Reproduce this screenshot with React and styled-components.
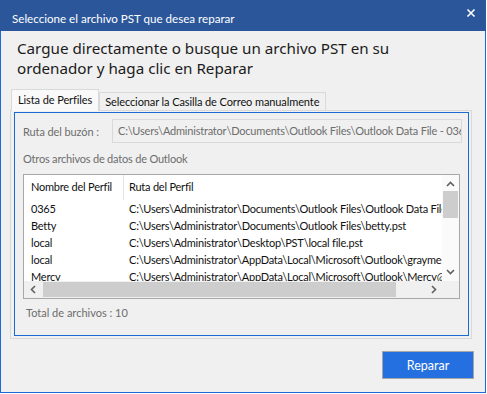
import React from "react";
import styled, { createGlobalStyle } from "styled-components";

const Global = createGlobalStyle`
  html, body {
    margin: 0;
    padding: 0;
    background: #ffffff;
  }
  body {
    font-family: Lato, "Noto Sans", sans-serif;
    font-size: 11px;
  }
`;

const Window = styled.div`
  width: 486px;
  height: 393px;
  box-sizing: border-box;
  background: #f0f0f0;
  border: 1px solid #1d6ad4;
  border-top: none;
  display: flex;
  flex-direction: column;
`;

const TitleBar = styled.div`
  height: 31px;
  margin: 0 -1px;
  background: #2b579a;
  color: #ffffff;
  display: flex;
  justify-content: space-between;
  align-items: flex-start;
  padding: 11px 10px 0 12px;
  box-sizing: border-box;
  font-size: 11.6px;
  line-height: 16px;
`;

const Close = styled.svg`
  margin-top: -3px;
`;

const Heading = styled.div`
  box-sizing: border-box;
  padding: 7px 0 0 16px;
  height: 57px;
  font-family: "Noto Sans", sans-serif;
  font-size: 15.2px;
  line-height: 20px;
  color: #1b1b1b;
`;

const TabStrip = styled.div`
  display: flex;
  align-items: flex-end;
  padding-left: 10px;
  height: 22px;
`;

const Tab = styled.div`
  box-sizing: border-box;
  height: ${p => (p.$active ? "22px" : "18px")};
  padding: ${p => (p.$active ? "0 6px 0 6px" : "0 6px 0 5px")};
  border: 1px solid #d9d9d9;
  border-bottom: none;
  background: ${p => (p.$active ? "#f9f9f9" : "#f0f0f0")};
  color: #111111;
  font-size: 11px;
  letter-spacing: -0.1px;
  line-height: ${p => (p.$active ? "20px" : "17px")};
  white-space: nowrap;
  margin-bottom: ${p => (p.$active ? "-1px" : "0")};
  position: relative;
  z-index: ${p => (p.$active ? 1 : 0)};
`;

const Panel = styled.div`
  margin: 0 13px 0 9px;
  height: 229px;
  box-sizing: border-box;
  border: 1px solid #d9d9d9;
  padding: 1px 2px 2px 3px;
  display: flex;
`;

const PanelInner = styled.div`
  flex: 1;
  min-width: 0;
  border: 1px solid #1a6ad6;
  padding: 6px 6px 0 8px;
  display: flex;
  flex-direction: column;
  color: #6d6d6d;
`;

const PathRow = styled.div`
  display: flex;
  align-items: center;
  height: 24px;
`;

const Label = styled.div`
  width: 89px;
  flex: none;
  white-space: nowrap;
  letter-spacing: -0.1px;
`;

const PathBox = styled.div`
  flex: 1;
  min-width: 0;
  height: 24px;
  box-sizing: border-box;
  border: 1px solid #d9d9d9;
  background: #f0f0f0;
  padding: 0 0 0 5px;
  line-height: 22px;
  white-space: nowrap;
  overflow: hidden;
  color: #6d6d6d;
  letter-spacing: -0.2px;
`;

const SubLabel = styled.div`
  margin-top: 7px;
  height: 17px;
  line-height: 17px;
  letter-spacing: -0.2px;
`;

const ListBox = styled.div`
  margin-top: 7px;
  width: 437px;
  height: 125px;
  box-sizing: border-box;
  border: 1px solid #a8a8a8;
  background: #ffffff;
  display: grid;
  grid-template-columns: 418px 17px;
  grid-template-rows: 106px 17px;
  color: #111111;
  letter-spacing: -0.22px;
`;

const ListView = styled.div`
  overflow: hidden;
  min-width: 0;
`;

const Row = styled.div`
  display: flex;
  height: ${p => (p.$header ? "25px" : "17px")};
  line-height: ${p => (p.$header ? "23px" : "17px")};
  white-space: nowrap;
`;

const NameCell = styled.div`
  width: 100px;
  flex: none;
  padding-left: 7px;
  box-sizing: border-box;
  border-right: ${p => (p.$header ? "1px solid #e5e5e5" : "1px solid transparent")};
`;

const PathCell = styled.div`
  padding-left: 5px;
`;

const VScroll = styled.div`
  background: #fafafa;
  display: flex;
  flex-direction: column;
  align-items: center;
  padding: 5px 0 5px;
`;

const VThumb = styled.div`
  width: 15px;
  height: 27px;
  background: #cdcdcd;
  margin-top: 2px;
`;

const Spacer = styled.div`
  flex: 1;
`;

const HScroll = styled.div`
  background: #f0f0f0;
  display: flex;
  align-items: center;
  padding: 0 4px 0 5px;
`;

const HThumb = styled.div`
  width: 353px;
  height: 15px;
  background: #cdcdcd;
  margin-left: 5px;
`;

const Corner = styled.div`
  background: #f0f0f0;
`;

const Total = styled.div`
  margin: 5px 0 0 3px;
  line-height: 17px;
`;

const Footer = styled.div`
  display: flex;
  justify-content: flex-end;
  padding: 12px 11px 0 0;
`;

const Button = styled.button`
  width: 92px;
  height: 28px;
  border: 1px solid #a6a6a6;
  background: #2570e0;
  color: #ffffff;
  font-family: inherit;
  font-size: 12.5px;
  padding: 0;
`;

const Chevron = ({ dir }) => {
  const d = {
    up: "M1 6 L4.5 2.5 L8 6",
    down: "M1 3 L4.5 6.5 L8 3",
    left: "M6 1 L2.5 4.5 L6 8",
    right: "M3 1 L6.5 4.5 L3 8",
  }[dir];
  return (
    <svg width="9" height="9" viewBox="0 0 9 9">
      <path d={d} fill="none" stroke="#606060" strokeWidth="1.6" />
    </svg>
  );
};

const profiles = [
  ["0365", "C:\\Users\\Administrator\\Documents\\Outlook Files\\Outlook Data File - 0365.pst"],
  ["Betty", "C:\\Users\\Administrator\\Documents\\Outlook Files\\betty.pst"],
  ["local", "C:\\Users\\Administrator\\Desktop\\PST\\local file.pst"],
  ["local", "C:\\Users\\Administrator\\AppData\\Local\\Microsoft\\Outlook\\graymes@outlook.com.ost"],
  ["Mercy", "C:\\Users\\Administrator\\AppData\\Local\\Microsoft\\Outlook\\Mercy@outlook.com.ost"],
];

export default function App() {
  return (
    <>
      <Global />
      <Window>
        <TitleBar>
          <span>Seleccione el archivo PST que desea reparar</span>
          <Close width="10" height="10" viewBox="0 0 10 10">
            <path d="M1.5 1.5 L8.5 8.5 M8.5 1.5 L1.5 8.5" stroke="#ffffff" strokeWidth="1.6" />
          </Close>
        </TitleBar>
        <Heading>
          Cargue directamente o busque un archivo PST en su
          <br />
          ordenador y haga clic en Reparar
        </Heading>
        <TabStrip>
          <Tab $active>Lista de Perfiles</Tab>
          <Tab>Seleccionar la Casilla de Correo manualmente</Tab>
        </TabStrip>
        <Panel>
          <PanelInner>
            <PathRow>
              <Label>Ruta del buzón :</Label>
              <PathBox>C:\Users\Administrator\Documents\Outlook Files\Outlook Data File - 0365.pst</PathBox>
            </PathRow>
            <SubLabel>Otros archivos de datos de Outlook</SubLabel>
            <ListBox>
              <ListView>
                <Row $header>
                  <NameCell $header>Nombre del Perfil</NameCell>
                  <PathCell>Ruta del Perfil</PathCell>
                </Row>
                {profiles.map(([name, path], i) => (
                  <Row key={i}>
                    <NameCell>{name}</NameCell>
                    <PathCell>{path}</PathCell>
                  </Row>
                ))}
              </ListView>
              <VScroll>
                <Chevron dir="up" />
                <VThumb />
                <Spacer />
                <Chevron dir="down" />
              </VScroll>
              <HScroll>
                <Chevron dir="left" />
                <HThumb />
                <Spacer />
                <Chevron dir="right" />
              </HScroll>
              <Corner />
            </ListBox>
            <Total>Total de archivos : 10</Total>
          </PanelInner>
        </Panel>
        <Footer>
          <Button>Reparar</Button>
        </Footer>
      </Window>
    </>
  );
}
